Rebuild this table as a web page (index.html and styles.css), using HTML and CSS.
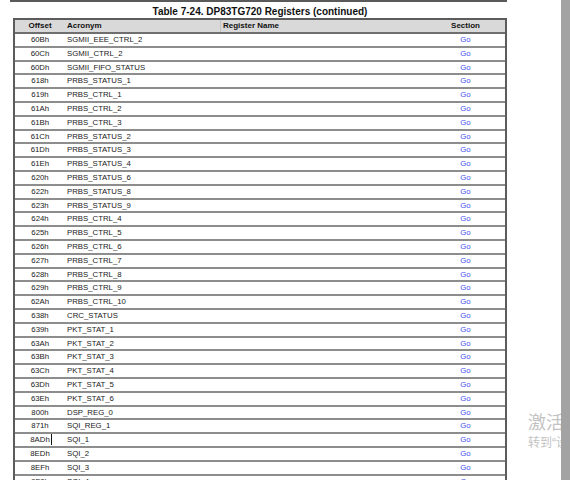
FILE: index.html
```html
<!DOCTYPE html>
<html>
<head>
<meta charset="utf-8">
<link rel="stylesheet" href="styles.css">
</head>
<body>
<div class="screen">
  <div class="page">
    <div class="top-rule"></div>
    <div class="sheet">
      <div class="title">Table 7-24. DP83TG720 Registers (continued)</div>
      <div class="table">
        <div class="row head">
          <div class="c off">Offset</div>
          <div class="c acr">Acronym</div>
          <div class="c reg">Register Name</div>
          <div class="c sec">Section</div>
        </div>
        <div class="row"><div class="c off">60Bh</div><div class="c acr">SGMII_EEE_CTRL_2</div><div class="c reg"></div><div class="c sec"><a>Go</a></div></div>
        <div class="row"><div class="c off">60Ch</div><div class="c acr">SGMII_CTRL_2</div><div class="c reg"></div><div class="c sec"><a>Go</a></div></div>
        <div class="row"><div class="c off">60Dh</div><div class="c acr">SGMII_FIFO_STATUS</div><div class="c reg"></div><div class="c sec"><a>Go</a></div></div>
        <div class="row"><div class="c off">618h</div><div class="c acr">PRBS_STATUS_1</div><div class="c reg"></div><div class="c sec"><a>Go</a></div></div>
        <div class="row"><div class="c off">619h</div><div class="c acr">PRBS_CTRL_1</div><div class="c reg"></div><div class="c sec"><a>Go</a></div></div>
        <div class="row"><div class="c off">61Ah</div><div class="c acr">PRBS_CTRL_2</div><div class="c reg"></div><div class="c sec"><a>Go</a></div></div>
        <div class="row"><div class="c off">61Bh</div><div class="c acr">PRBS_CTRL_3</div><div class="c reg"></div><div class="c sec"><a>Go</a></div></div>
        <div class="row"><div class="c off">61Ch</div><div class="c acr">PRBS_STATUS_2</div><div class="c reg"></div><div class="c sec"><a>Go</a></div></div>
        <div class="row"><div class="c off">61Dh</div><div class="c acr">PRBS_STATUS_3</div><div class="c reg"></div><div class="c sec"><a>Go</a></div></div>
        <div class="row"><div class="c off">61Eh</div><div class="c acr">PRBS_STATUS_4</div><div class="c reg"></div><div class="c sec"><a>Go</a></div></div>
        <div class="row"><div class="c off">620h</div><div class="c acr">PRBS_STATUS_6</div><div class="c reg"></div><div class="c sec"><a>Go</a></div></div>
        <div class="row"><div class="c off">622h</div><div class="c acr">PRBS_STATUS_8</div><div class="c reg"></div><div class="c sec"><a>Go</a></div></div>
        <div class="row"><div class="c off">623h</div><div class="c acr">PRBS_STATUS_9</div><div class="c reg"></div><div class="c sec"><a>Go</a></div></div>
        <div class="row"><div class="c off">624h</div><div class="c acr">PRBS_CTRL_4</div><div class="c reg"></div><div class="c sec"><a>Go</a></div></div>
        <div class="row"><div class="c off">625h</div><div class="c acr">PRBS_CTRL_5</div><div class="c reg"></div><div class="c sec"><a>Go</a></div></div>
        <div class="row"><div class="c off">626h</div><div class="c acr">PRBS_CTRL_6</div><div class="c reg"></div><div class="c sec"><a>Go</a></div></div>
        <div class="row"><div class="c off">627h</div><div class="c acr">PRBS_CTRL_7</div><div class="c reg"></div><div class="c sec"><a>Go</a></div></div>
        <div class="row"><div class="c off">628h</div><div class="c acr">PRBS_CTRL_8</div><div class="c reg"></div><div class="c sec"><a>Go</a></div></div>
        <div class="row"><div class="c off">629h</div><div class="c acr">PRBS_CTRL_9</div><div class="c reg"></div><div class="c sec"><a>Go</a></div></div>
        <div class="row"><div class="c off">62Ah</div><div class="c acr">PRBS_CTRL_10</div><div class="c reg"></div><div class="c sec"><a>Go</a></div></div>
        <div class="row"><div class="c off">638h</div><div class="c acr">CRC_STATUS</div><div class="c reg"></div><div class="c sec"><a>Go</a></div></div>
        <div class="row"><div class="c off">639h</div><div class="c acr">PKT_STAT_1</div><div class="c reg"></div><div class="c sec"><a>Go</a></div></div>
        <div class="row"><div class="c off">63Ah</div><div class="c acr">PKT_STAT_2</div><div class="c reg"></div><div class="c sec"><a>Go</a></div></div>
        <div class="row"><div class="c off">63Bh</div><div class="c acr">PKT_STAT_3</div><div class="c reg"></div><div class="c sec"><a>Go</a></div></div>
        <div class="row"><div class="c off">63Ch</div><div class="c acr">PKT_STAT_4</div><div class="c reg"></div><div class="c sec"><a>Go</a></div></div>
        <div class="row"><div class="c off">63Dh</div><div class="c acr">PKT_STAT_5</div><div class="c reg"></div><div class="c sec"><a>Go</a></div></div>
        <div class="row"><div class="c off">63Eh</div><div class="c acr">PKT_STAT_6</div><div class="c reg"></div><div class="c sec"><a>Go</a></div></div>
        <div class="row"><div class="c off">800h</div><div class="c acr">DSP_REG_0</div><div class="c reg"></div><div class="c sec"><a>Go</a></div></div>
        <div class="row"><div class="c off">871h</div><div class="c acr">SQI_REG_1</div><div class="c reg"></div><div class="c sec"><a>Go</a></div></div>
        <div class="row"><div class="c off">8ADh<span class="caret"></span></div><div class="c acr">SQI_1</div><div class="c reg"></div><div class="c sec"><a>Go</a></div></div>
        <div class="row"><div class="c off">8EDh</div><div class="c acr">SQI_2</div><div class="c reg"></div><div class="c sec"><a>Go</a></div></div>
        <div class="row"><div class="c off">8EFh</div><div class="c acr">SQI_3</div><div class="c reg"></div><div class="c sec"><a>Go</a></div></div>
        <div class="row"><div class="c off">8F0h</div><div class="c acr">SQI_4</div><div class="c reg"></div><div class="c sec"><a>Go</a></div></div>
      </div>
    </div>
    <div class="watermark">
      <div class="wm-big">激活</div>
      <div class="wm-small">转到<span class="q">“</span>设</div>
    </div>
  </div>
  <div class="scrollbar"></div>
</div>
</body>
</html>
```

FILE: styles.css
```css
html, body {
  margin: 0;
  padding: 0;
  background: #ffffff;
}
.screen {
  width: 570px;
  height: 480px;
  overflow: hidden;
  display: flex;
  font-family: "Liberation Sans", Arial, sans-serif;
}
.page {
  position: relative;
  width: 561px;
  height: 480px;
  overflow: hidden;
  padding-left: 10px;
  box-sizing: border-box;
}
.scrollbar {
  width: 9px;
  height: 480px;
  background: #a3a3a3;
}
.top-rule {
  width: 497px;
  height: 2px;
  background: #5a5a5a;
}
.sheet {
  margin-left: 3px;
  width: 494px;
}
.title {
  height: 16px;
  line-height: 20px;
  font-size: 10px;
  font-weight: bold;
  text-align: center;
  color: #111;
}
.table {
  border-left: 2px solid #5c5c5c;
  border-right: 2px solid #5c5c5c;
  border-top: 2px solid #5c5c5c;
}
.row {
  display: grid;
  grid-template-columns: 50px 155px 206px 1fr;
  height: 13.8px;
  box-sizing: border-box;
  border-bottom: 2px solid #8d8d8d;
  font-size: 7.8px;
  line-height: 11.8px;
  color: #222;
}
.row.head {
  height: 14px;
  background: #d9d9d9;
  border-bottom: 2px solid #6f6f6f;
  font-weight: bold;
  font-size: 8px;
  line-height: 12px;
  color: #111;
}
.c {
  white-space: nowrap;
  overflow: hidden;
}
.off {
  text-align: center;
  position: relative;
}
.acr {
  padding-left: 2px;
}
.head .reg {
  border-left: 1px solid #c4c4c4;
  padding-left: 2px;
}
.sec {
  text-align: center;
}
.sec a {
  color: #3f52f0;
}
.caret {
  position: absolute;
  top: 0;
  margin-left: 1px;
  width: 1px;
  height: 11px;
  background: #111;
}
.watermark {
  position: absolute;
  left: 528px;
  top: 408px;
  color: #c3c3c3;
  font-family: "Noto Sans CJK SC", sans-serif;
  white-space: nowrap;
}
.wm-big {
  font-size: 18px;
  line-height: 26px;
}
.wm-small {
  font-size: 12px;
  line-height: 16px;
}
.q {
  font-family: "Liberation Sans", sans-serif;
}
```
